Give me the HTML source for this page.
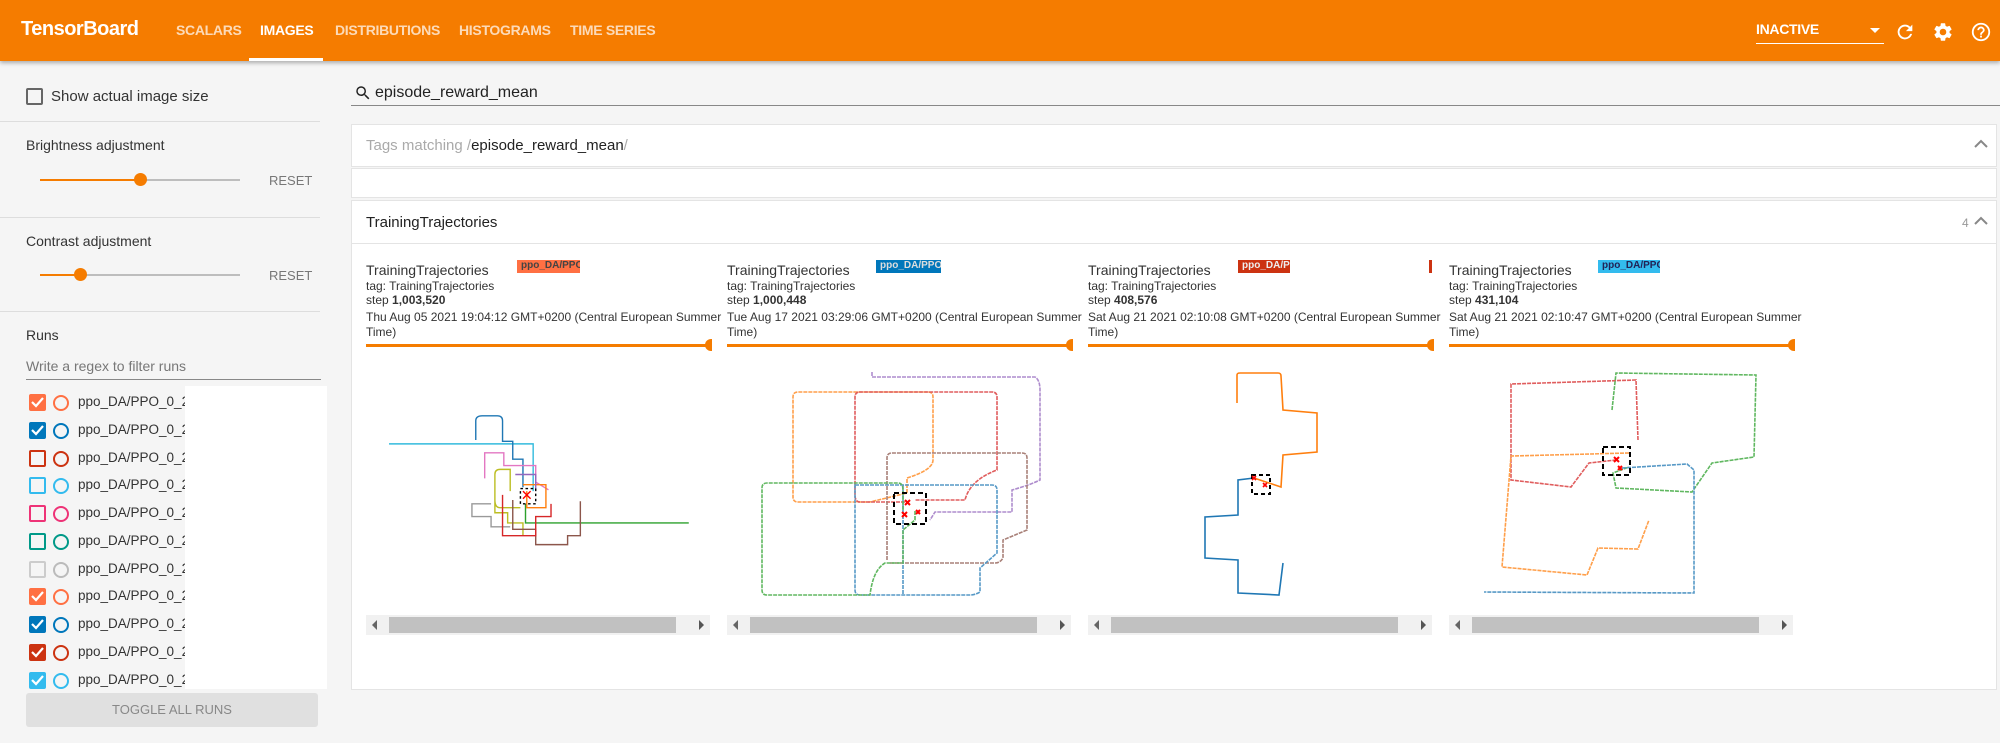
<!DOCTYPE html>
<html><head><meta charset="utf-8"><style>
*{box-sizing:border-box;margin:0;padding:0}
body{width:2000px;height:743px;background:#f5f5f5;font-family:"Liberation Sans",sans-serif;position:relative;overflow:hidden;color:#212121}
.a{position:absolute;white-space:nowrap}
.hdr{position:absolute;left:0;top:0;width:2000px;height:61px;background:#f57c00;box-shadow:0 2px 4px rgba(0,0,0,.3)}
.nav{position:absolute;top:22px;font-size:14px;font-weight:bold;color:rgba(255,255,255,.72);letter-spacing:-0.3px}
.line{position:absolute;height:1px;background:#ddd}
.cb{position:absolute;width:17px;height:17px;border:2px solid;border-radius:2px}
.ci{position:absolute;width:16px;height:16px;border:2px solid;border-radius:50%}
.rt{position:absolute;font-size:13.5px;color:#333}
.card{position:absolute;background:#fff;border:1px solid #e4e4e4}
.small{font-size:12.5px;color:#333}
</style></head><body>
<div class="hdr">
<div class="a" style="left:21px;top:18px;font-size:20px;font-weight:bold;color:#fff;letter-spacing:-0.5px">TensorBoard</div>
<div class="nav" style="left:176px">SCALARS</div>
<div class="nav" style="left:260px;color:#fff">IMAGES</div>
<div class="nav" style="left:335px">DISTRIBUTIONS</div>
<div class="nav" style="left:459px">HISTOGRAMS</div>
<div class="nav" style="left:570px">TIME SERIES</div>
<div style="position:absolute;left:249px;top:58px;width:74px;height:3px;background:#fff"></div>
<div class="nav" style="left:1756px;top:21px;color:#fff">INACTIVE</div>
<div style="position:absolute;left:1870px;top:28px;border:5px solid transparent;border-top:5px solid #fff"></div>
<div style="position:absolute;left:1756px;top:43px;width:128px;height:1px;background:#fff"></div>
<svg class="a" style="left:1894px;top:21px" width="22" height="22" viewBox="0 0 24 24"><path fill="#fff" d="M17.65 6.35A7.960 7.960 0 0 0 12 4a8 8 0 1 0 7.73 10h-2.080A6 6 0 1 1 12 6c1.66 0 3.14.69 4.22 1.78L13 11h7V4l-2.350 2.35z"/></svg>
<svg class="a" style="left:1932px;top:21px" width="22" height="22" viewBox="0 0 24 24"><path fill="#fff" d="M19.14 12.94c.04-.3.06-.61.06-.94s-.02-.64-.07-.94l2.03-1.58a.49.49 0 0 0 .12-.61l-1.92-3.32a.49.49 0 0 0-.59-.22l-2.39.96a7 7 0 0 0-1.62-.94l-.36-2.54A.48.48 0 0 0 13.92 2.4h-3.84a.48.48 0 0 0-.48.41l-.36 2.54c-.59.24-1.13.57-1.62.94l-2.39-.96a.48.48 0 0 0-.59.22L2.72 8.87a.47.47 0 0 0 .12.61l2.03 1.58c-.05.3-.07.62-.07.94s.02.64.07.94l-2.03 1.58a.49.49 0 0 0-.12.61l1.92 3.32c.12.22.37.29.59.22l2.39-.96c.5.38 1.03.7 1.62.94l.36 2.54c.05.24.24.41.48.41h3.84c.24 0 .44-.17.47-.41l.36-2.54c.59-.24 1.13-.56 1.62-.94l2.39.96c.22.08.47 0 .59-.22l1.92-3.32a.47.47 0 0 0-.12-.61l-2.010-1.58zM12 15.6A3.6 3.6 0 1 1 12 8.4a3.6 3.6 0 0 1 0 7.2z"/></svg>
<svg class="a" style="left:1970px;top:21px" width="22" height="22" viewBox="0 0 24 24"><path fill="#fff" d="M11 18h2v-2h-2v2zm1-16a10 10 0 1 0 0 20 10 10 0 0 0 0-20zm0 18a8 8 0 1 1 0-16 8 8 0 0 1 0 16zm0-14a4 4 0 0 0-4 4h2a2 2 0 1 1 4 0c0 2-3 1.75-3 5h2c0-2.25 3-2.5 3-5a4 4 0 0 0-4-4z"/></svg>
</div>

<!-- sidebar -->
<div class="cb" style="left:26px;top:88px;border-color:#666;width:17px;height:17px"></div>
<div class="a" style="left:51px;top:88px;font-size:15px;color:#333">Show actual image size</div>
<div class="line" style="left:0;top:121px;width:320px"></div>
<div class="a" style="left:26px;top:137px;font-size:14px;color:#333">Brightness adjustment</div>
<div style="position:absolute;left:40px;top:179px;width:200px;height:2px;background:#bdbdbd"></div>
<div style="position:absolute;left:40px;top:179px;width:100px;height:2px;background:#f57c00"></div>
<div style="position:absolute;left:134px;top:173px;width:13px;height:13px;border-radius:50%;background:#f57c00"></div>
<div class="a" style="left:269px;top:173px;font-size:13px;color:#777">RESET</div>
<div class="line" style="left:0;top:217px;width:320px"></div>
<div class="a" style="left:26px;top:233px;font-size:14px;color:#333">Contrast adjustment</div>
<div style="position:absolute;left:40px;top:274px;width:200px;height:2px;background:#bdbdbd"></div>
<div style="position:absolute;left:40px;top:274px;width:40px;height:2px;background:#f57c00"></div>
<div style="position:absolute;left:74px;top:268px;width:13px;height:13px;border-radius:50%;background:#f57c00"></div>
<div class="a" style="left:269px;top:268px;font-size:13px;color:#777">RESET</div>
<div class="line" style="left:0;top:311px;width:320px"></div>
<div class="a" style="left:26px;top:327px;font-size:14px;color:#333">Runs</div>
<div class="a" style="left:26px;top:358px;font-size:14px;color:#777">Write a regex to filter runs</div>
<div style="position:absolute;left:26px;top:379px;width:295px;height:1px;background:#888"></div>

<div class="cb" style="left:29px;top:394px;background:#ff7043;border-color:#ff7043"></div><div class="ci" style="left:53px;top:395px;border-color:#ff7043"></div><div class="rt" style="left:78px;top:394px">ppo_DA/PPO_0_20</div>
<div class="cb" style="left:29px;top:422px;background:#0077bb;border-color:#0077bb"></div><div class="ci" style="left:53px;top:423px;border-color:#0077bb"></div><div class="rt" style="left:78px;top:422px">ppo_DA/PPO_0_20</div>
<div class="cb" style="left:29px;top:450px;border-color:#cc3311"></div><div class="ci" style="left:53px;top:451px;border-color:#cc3311"></div><div class="rt" style="left:78px;top:450px">ppo_DA/PPO_0_20</div>
<div class="cb" style="left:29px;top:477px;border-color:#33bbee"></div><div class="ci" style="left:53px;top:478px;border-color:#33bbee"></div><div class="rt" style="left:78px;top:477px">ppo_DA/PPO_0_20</div>
<div class="cb" style="left:29px;top:505px;border-color:#ee3377"></div><div class="ci" style="left:53px;top:506px;border-color:#ee3377"></div><div class="rt" style="left:78px;top:505px">ppo_DA/PPO_0_20</div>
<div class="cb" style="left:29px;top:533px;border-color:#009988"></div><div class="ci" style="left:53px;top:534px;border-color:#009988"></div><div class="rt" style="left:78px;top:533px">ppo_DA/PPO_0_20</div>
<div class="cb" style="left:29px;top:561px;border-color:#ccc"></div><div class="ci" style="left:53px;top:562px;border-color:#bbb"></div><div class="rt" style="left:78px;top:561px">ppo_DA/PPO_0_20</div>
<div class="cb" style="left:29px;top:588px;background:#ff7043;border-color:#ff7043"></div><div class="ci" style="left:53px;top:589px;border-color:#ff7043"></div><div class="rt" style="left:78px;top:588px">ppo_DA/PPO_0_20</div>
<div class="cb" style="left:29px;top:616px;background:#0077bb;border-color:#0077bb"></div><div class="ci" style="left:53px;top:617px;border-color:#0077bb"></div><div class="rt" style="left:78px;top:616px">ppo_DA/PPO_0_20</div>
<div class="cb" style="left:29px;top:644px;background:#cc3311;border-color:#cc3311"></div><div class="ci" style="left:53px;top:645px;border-color:#cc3311"></div><div class="rt" style="left:78px;top:644px">ppo_DA/PPO_0_20</div>
<div class="cb" style="left:29px;top:672px;background:#33bbee;border-color:#33bbee"></div><div class="ci" style="left:53px;top:673px;border-color:#33bbee"></div><div class="rt" style="left:78px;top:672px">ppo_DA/PPO_0_20</div>
<div style="position:absolute;left:185px;top:386px;width:142px;height:303px;background:#fff"></div>
<svg class="a" style="left:0;top:0" width="60" height="700">
<g fill="none" stroke="#fff" stroke-width="2.2"><path d="M32 402l4 4 7-8"/><path d="M32 430l4 4 7-8"/><path d="M32 596l4 4 7-8"/><path d="M32 624l4 4 7-8"/><path d="M32 652l4 4 7-8"/><path d="M32 680l4 4 7-8"/></g></svg>
<div style="position:absolute;left:26px;top:693px;width:292px;height:34px;background:#e0e0e0;border-radius:3px;font-size:13px;color:#888;text-align:center;line-height:34px">TOGGLE ALL RUNS</div>

<!-- main -->
<svg class="a" style="left:354px;top:84px" width="18" height="18" viewBox="0 0 24 24"><path fill="#222" d="M15.5 14h-.79l-.28-.27A6.47 6.47 0 0 0 16 9.5 6.5 6.5 0 1 0 9.5 16c1.61 0 3.09-.59 4.23-1.57l.27.28v.79l5 4.99L20.49 19l-4.990-5zm-6 0C7.01 14 5 11.99 5 9.5S7.01 5 9.5 5 14 7.01 14 9.5 11.99 14 9.5 14z"/></svg>
<div class="a" style="left:375px;top:84px;font-size:16px;color:#222">episode_reward_mean</div>
<div style="position:absolute;left:351px;top:105px;width:1649px;height:1px;background:#888"></div>

<div class="card" style="left:351px;top:124px;width:1646px;height:43px"></div>
<div class="a" style="left:366px;top:137px;font-size:15px;color:#aaa">Tags matching /<span style="color:#222">episode_reward_mean</span>/</div>
<svg class="a" style="left:1973px;top:138px" width="16" height="12"><path d="M2 9l6-6 6 6" fill="none" stroke="#888" stroke-width="2"/></svg>
<div class="card" style="left:351px;top:168px;width:1646px;height:30px"></div>
<div class="card" style="left:351px;top:200px;width:1646px;height:44px"></div>
<div class="a" style="left:366px;top:214px;font-size:15px;color:#222">TrainingTrajectories</div>
<div class="a" style="left:1962px;top:216px;font-size:12px;color:#999">4</div>
<svg class="a" style="left:1973px;top:215px" width="16" height="12"><path d="M2 9l6-6 6 6" fill="none" stroke="#888" stroke-width="2"/></svg>
<div class="card" style="left:351px;top:244px;width:1646px;height:446px;border-top:none"></div>

<!-- image cards -->
<div style="position:absolute;left:366px;top:262px">
<div class="a" style="left:0;top:0;font-size:14px;color:#333">TrainingTrajectories</div>
<div class="a" style="left:151px;top:-2px;width:63px;height:13px;background:#ff7043;font-size:10px;font-weight:bold;color:#444;padding-left:4px;overflow:hidden">ppo_DA/PPO</div>
<div class="a small" style="left:0;top:17px;font-size:12px">tag: TrainingTrajectories</div>
<div class="a small" style="left:0;top:31px;font-size:12px">step <b>1,003,520</b></div>
<div class="a small" style="left:0;top:48px;font-size:12px">Thu Aug 05 2021 19:04:12 GMT+0200 (Central European Summer</div>
<div class="a small" style="left:0;top:63px;font-size:12px">Time)</div>
<div style="position:absolute;left:0;top:82px;width:344px;height:3px;background:#f57c00"></div>
<div style="position:absolute;left:339px;top:77px;width:7px;height:12px;border-radius:6px 0 0 6px;background:#f57c00"></div>
<div style="position:absolute;left:0;top:353px;width:344px;height:20px;background:#f1f1f1"></div>
<div style="position:absolute;left:23px;top:355px;width:287px;height:16px;background:#c1c1c1"></div>
<div style="position:absolute;left:6px;top:358px;border:5px solid transparent;border-right:5px solid #666;border-left:none"></div>
<div style="position:absolute;left:333px;top:358px;border:5px solid transparent;border-left:5px solid #555;border-right:none"></div>
</div>
<div style="position:absolute;left:727px;top:262px">
<div class="a" style="left:0;top:0;font-size:14px;color:#333">TrainingTrajectories</div>
<div class="a" style="left:149px;top:-2px;width:65px;height:13px;background:#0077bb;font-size:10px;font-weight:bold;color:#ddd;padding-left:4px;overflow:hidden">ppo_DA/PPO</div>
<div class="a small" style="left:0;top:17px;font-size:12px">tag: TrainingTrajectories</div>
<div class="a small" style="left:0;top:31px;font-size:12px">step <b>1,000,448</b></div>
<div class="a small" style="left:0;top:48px;font-size:12px">Tue Aug 17 2021 03:29:06 GMT+0200 (Central European Summer</div>
<div class="a small" style="left:0;top:63px;font-size:12px">Time)</div>
<div style="position:absolute;left:0;top:82px;width:344px;height:3px;background:#f57c00"></div>
<div style="position:absolute;left:339px;top:77px;width:7px;height:12px;border-radius:6px 0 0 6px;background:#f57c00"></div>
<div style="position:absolute;left:0;top:353px;width:344px;height:20px;background:#f1f1f1"></div>
<div style="position:absolute;left:23px;top:355px;width:287px;height:16px;background:#c1c1c1"></div>
<div style="position:absolute;left:6px;top:358px;border:5px solid transparent;border-right:5px solid #666;border-left:none"></div>
<div style="position:absolute;left:333px;top:358px;border:5px solid transparent;border-left:5px solid #555;border-right:none"></div>
</div>
<div style="position:absolute;left:1088px;top:262px">
<div class="a" style="left:0;top:0;font-size:14px;color:#333">TrainingTrajectories</div>
<div class="a" style="left:150px;top:-2px;width:52px;height:13px;background:#cc3311;font-size:10px;font-weight:bold;color:#eee;padding-left:4px;overflow:hidden">ppo_DA/P</div>
<div class="a" style="left:341px;top:-2px;width:3px;height:13px;background:#cc3311"></div>
<div class="a small" style="left:0;top:17px;font-size:12px">tag: TrainingTrajectories</div>
<div class="a small" style="left:0;top:31px;font-size:12px">step <b>408,576</b></div>
<div class="a small" style="left:0;top:48px;font-size:12px">Sat Aug 21 2021 02:10:08 GMT+0200 (Central European Summer</div>
<div class="a small" style="left:0;top:63px;font-size:12px">Time)</div>
<div style="position:absolute;left:0;top:82px;width:344px;height:3px;background:#f57c00"></div>
<div style="position:absolute;left:339px;top:77px;width:7px;height:12px;border-radius:6px 0 0 6px;background:#f57c00"></div>
<div style="position:absolute;left:0;top:353px;width:344px;height:20px;background:#f1f1f1"></div>
<div style="position:absolute;left:23px;top:355px;width:287px;height:16px;background:#c1c1c1"></div>
<div style="position:absolute;left:6px;top:358px;border:5px solid transparent;border-right:5px solid #666;border-left:none"></div>
<div style="position:absolute;left:333px;top:358px;border:5px solid transparent;border-left:5px solid #555;border-right:none"></div>
</div>
<div style="position:absolute;left:1449px;top:262px">
<div class="a" style="left:0;top:0;font-size:14px;color:#333">TrainingTrajectories</div>
<div class="a" style="left:149px;top:-2px;width:62px;height:13px;background:#33bbee;font-size:10px;font-weight:bold;color:#225;padding-left:4px;overflow:hidden">ppo_DA/PPO</div>
<div class="a small" style="left:0;top:17px;font-size:12px">tag: TrainingTrajectories</div>
<div class="a small" style="left:0;top:31px;font-size:12px">step <b>431,104</b></div>
<div class="a small" style="left:0;top:48px;font-size:12px">Sat Aug 21 2021 02:10:47 GMT+0200 (Central European Summer</div>
<div class="a small" style="left:0;top:63px;font-size:12px">Time)</div>
<div style="position:absolute;left:0;top:82px;width:344px;height:3px;background:#f57c00"></div>
<div style="position:absolute;left:339px;top:77px;width:7px;height:12px;border-radius:6px 0 0 6px;background:#f57c00"></div>
<div style="position:absolute;left:0;top:353px;width:344px;height:20px;background:#f1f1f1"></div>
<div style="position:absolute;left:23px;top:355px;width:287px;height:16px;background:#c1c1c1"></div>
<div style="position:absolute;left:6px;top:358px;border:5px solid transparent;border-right:5px solid #666;border-left:none"></div>
<div style="position:absolute;left:333px;top:358px;border:5px solid transparent;border-left:5px solid #555;border-right:none"></div>
</div>

<!-- trajectories -->
<svg class="a" style="left:0;top:0" width="2000" height="743" fill="none" stroke-width="1.6">
<g transform="scale(1.2755)" stroke-width="1.1">
<path stroke="#33bbdd" d="M305 348H418V385"/>
<path stroke="#1f77b4" d="M373 345V330Q373 326 378 326H390Q394 326 394 330V346H402V360H410V382"/>
<path stroke="#e377c2" d="M380 375V355H395V365H420V378L430 384"/>
<path stroke="#bcbd22" d="M408 398H392Q388 398 388 392V372Q388 368 392 368H400V385M388 392V402H398V410H410V420"/>
<path stroke="#2ca02c" d="M412 395V410H540"/>
<path stroke="#8c564b" d="M402 392V415H420V427H445V420H455V393"/>
<path stroke="#999" d="M385 395H370V405H385V413H400"/>
<path stroke="#d62728" d="M394 388V420H420V405H432V395"/>
<path stroke="#ff7f0e" d="M410 380H428V398H413V385"/>
<path stroke="#9467bd" d="M404 372H420V385"/>
<rect x="408" y="383" width="12" height="12" stroke="#000" stroke-dasharray="2 2"/>
<path stroke="#f00" d="M410 385l6 6M416 385l-6 6"/>
</g>
<g opacity="0.75">
<path stroke="#ff7f0e" stroke-dasharray="4 1" d="M907 493V478Q933 470 933 460V397Q933 392 928 392H798Q793 392 793 397V497Q793 502 798 502H870L907 493"/>
<path stroke="#d62728" stroke-dasharray="4 1" d="M905 502H860Q855 502 855 495V397Q855 392 860 392H992Q997 392 997 397V470Q970 480 965 500H915"/>
<path stroke="#9467bd" stroke-dasharray="4 1" d="M872 372V377H1035Q1040 380 1040 390V480Q1030 485 1012 490V512H935L930 520"/>
<path stroke="#8c564b" stroke-dasharray="4 1" d="M887 560V458Q887 453 892 453H1022Q1027 453 1027 458V530L1003 540V558Q1000 563 995 563H890"/>
<path stroke="#1f77b4" stroke-dasharray="4 1" d="M855 485H992Q997 485 997 490V553L980 568V592Q975 595 970 595H860Q855 595 855 590ZM903 485V595"/>
<path stroke="#2ca02c" stroke-dasharray="4 1" d="M903 510V490Q903 483 898 483H767Q762 483 762 488V590Q762 595 767 595H870Q873 570 885 563H903V530L915 520V510"/>
</g>
<rect x="894" y="493" width="32" height="31" stroke="#000" stroke-width="2" stroke-dasharray="5 3"/>
<path stroke="#f00" stroke-width="2" d="M905 500l5 5M910 500l-5 5M902 512l5 5M907 512l-5 5M916 510l4 4M920 510l-4 4"/>
<path stroke="#ff7f0e" d="M1237 403V375Q1237 373 1240 373H1278Q1281 373 1281 376L1283 410L1317 413V452L1283 455L1281 487L1254 478"/>
<path stroke="#1f77b4" d="M1254 478L1238 480V515L1205 517V558L1238 560V593L1279 595L1283 563"/>
<rect x="1252" y="475" width="18" height="19" stroke="#000" stroke-width="2" stroke-dasharray="4 3"/>
<path stroke="#f00" d="M1252 476l4 4M1256 476l-4 4M1263 483l4 4M1267 483l-4 4"/>
<g opacity="0.75">
<path stroke="#d62728" stroke-dasharray="4 1" d="M1638 440L1636 380L1511 384V480L1571 487L1589 463L1616 460"/>
<path stroke="#2ca02c" stroke-dasharray="4 1" d="M1612 410L1616 373L1756 375L1754 457L1712 463L1692 492L1616 488L1613 473L1629 467"/>
<path stroke="#ff7f0e" stroke-dasharray="4 1" d="M1629 453L1511 456L1502 567L1587 575L1598 548L1638 549L1649 520"/>
<path stroke="#1f77b4" stroke-dasharray="4 1" d="M1622 468L1687 464L1694 470V593L1484 592"/>
</g>
<rect x="1603" y="447" width="27" height="28" stroke="#000" stroke-width="2" stroke-dasharray="5 3"/>
<path stroke="#f00" stroke-width="2" d="M1614 457l5 5M1619 457l-5 5M1618 466l4 4M1622 466l-4 4"/>
</svg>
</body></html>
